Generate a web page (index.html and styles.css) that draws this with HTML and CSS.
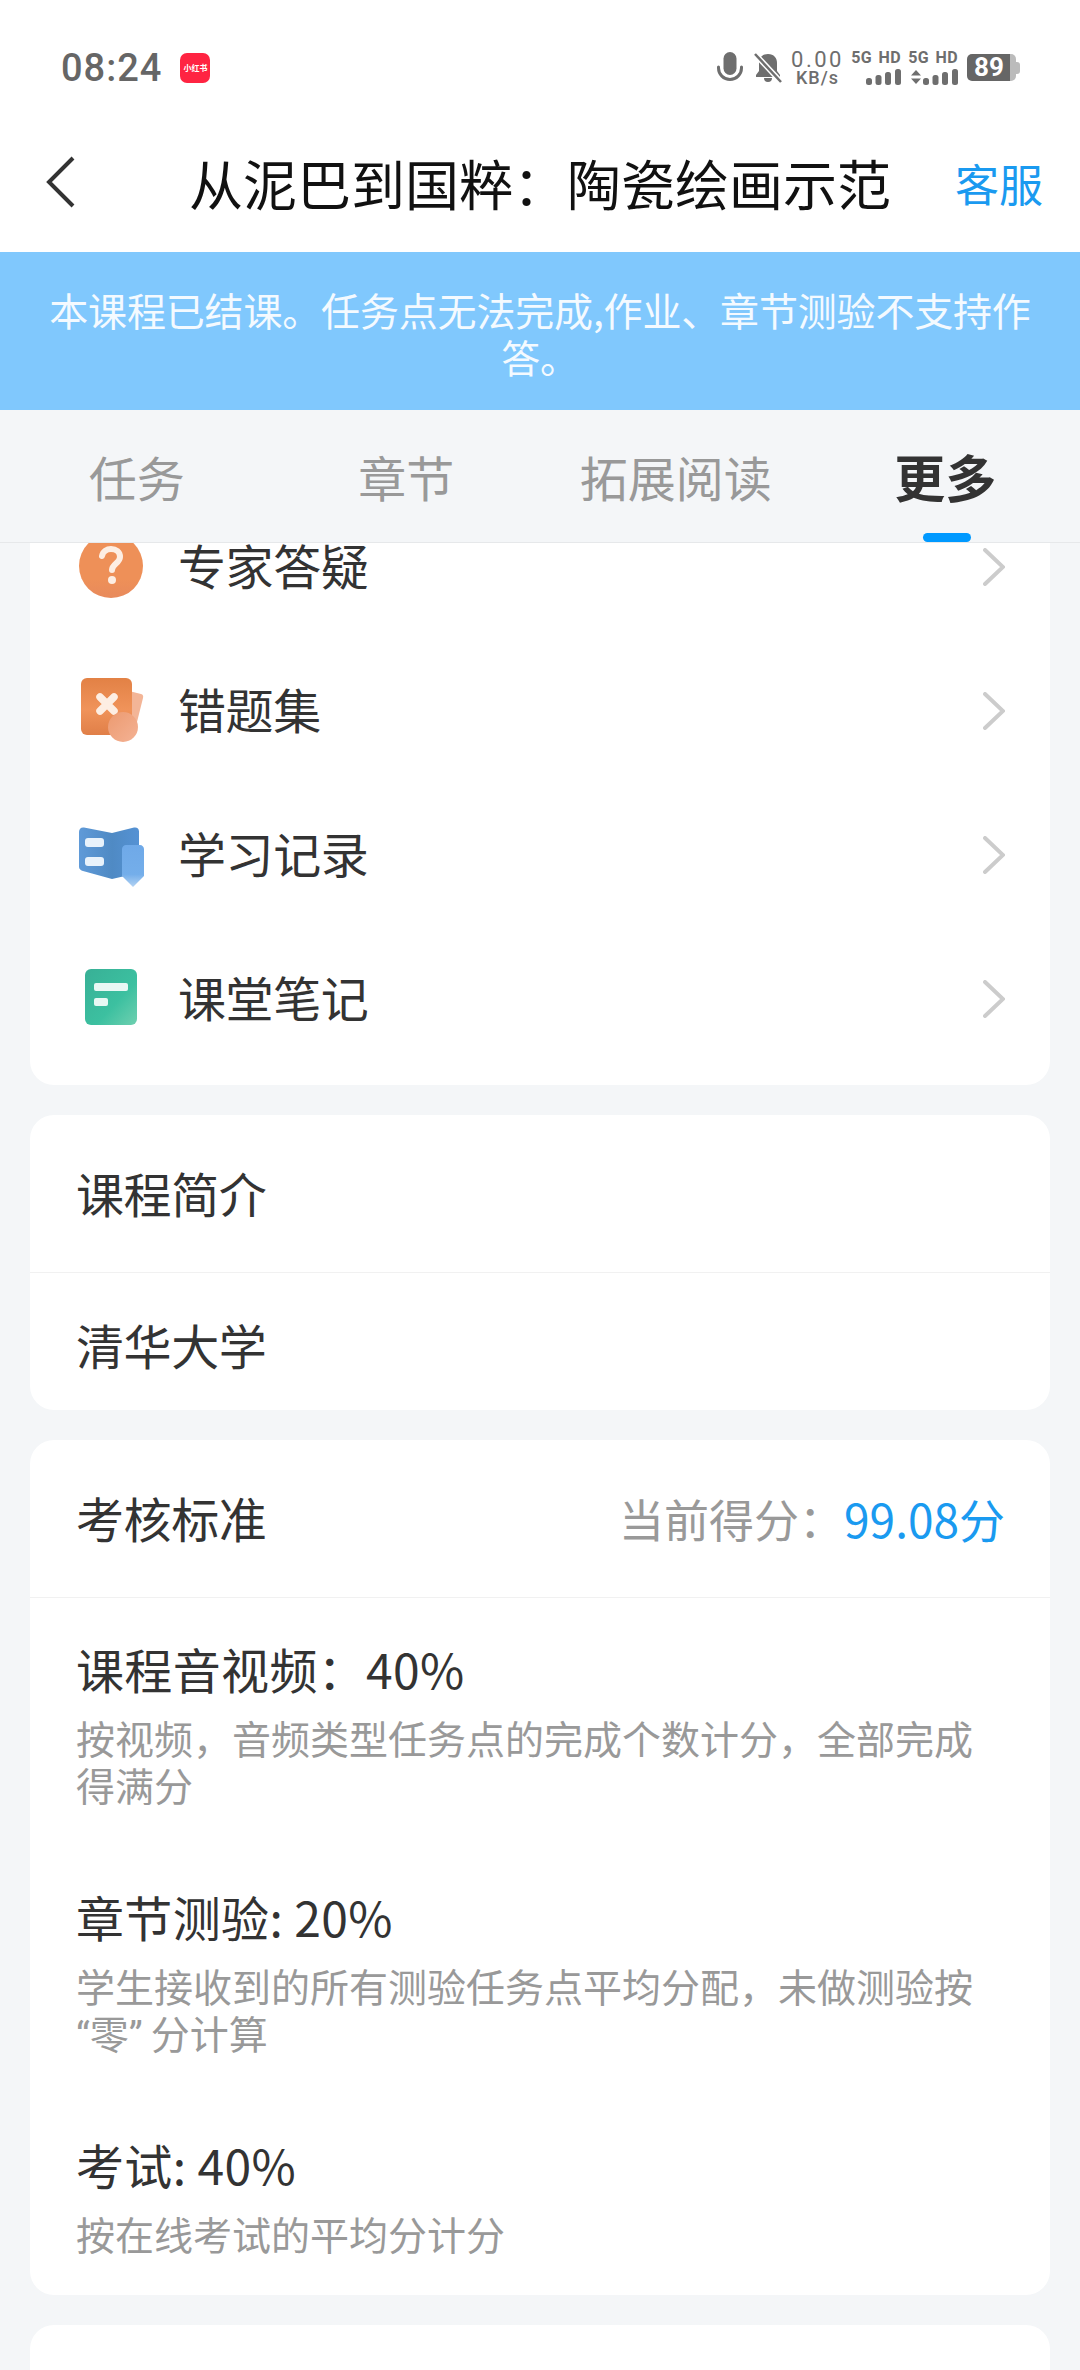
FILE: index.html
```html
<!DOCTYPE html>
<html lang="zh-CN">
<head>
<meta charset="utf-8">
<title>从泥巴到国粹：陶瓷绘画示范</title>
<link rel="stylesheet" href="styles.css">
</head>
<body>
<div class="app">
  <header class="statusbar">
    <div class="status-left">
      <span class="time">08:24</span>
      <span class="xhs">小红书</span>
    </div>
    <div class="status-right">
      <svg class="ic-mic" width="26" height="32" viewBox="0 0 26 32"><rect x="6.500" y="0" width="13" height="23" rx="6.500" fill="#6e6e6e"/><path d="M1.500 15v1a11.500 11.500 0 0 0 23 0v-1" fill="none" stroke="#6e6e6e" stroke-width="3" stroke-linecap="round"/></svg>
      <svg class="ic-bell" width="28" height="30" viewBox="0 0 28 30"><path d="M14 1c6 0 9 4 9 9v8l3 4v2H2v-2l3-4v-8c0-5 3-9 9-9zM10 25h8a4 4 0 0 1-8 0z" fill="#6e6e6e"/><path d="M1 1l26 28" stroke="#fff" stroke-width="5.500"/><path d="M1 1l26 28" stroke="#6e6e6e" stroke-width="2.500"/></svg>
      <div class="speed"><span class="speed-num">0.00</span><span class="speed-unit">KB/s</span></div>
      <div class="sim">
        <span class="sim-label">5G HD</span>
        <svg class="bars" width="35" height="16" viewBox="0 0 35 16"><rect x="0" y="9" width="6" height="7" rx="2.500"/><rect x="9.500" y="6" width="6" height="10" rx="2.500"/><rect x="19" y="3" width="6" height="13" rx="2.500"/><rect x="29" y="0" width="6" height="16" rx="2.500"/></svg>
      </div>
      <div class="sim">
        <span class="sim-label">5G HD</span>
        <svg class="bars" width="47" height="16" viewBox="0 0 47 16"><path d="M5 1l5 5.500H0zM5 15l5-5.500H0z"/><rect x="12" y="9" width="6" height="7" rx="2.500"/><rect x="21.500" y="6" width="6" height="10" rx="2.500"/><rect x="31" y="3" width="6" height="13" rx="2.500"/><rect x="41" y="0" width="6" height="16" rx="2.500"/></svg>
      </div>
      <div class="battery"><span class="batt-level">89</span><span class="batt-tip"></span></div>
    </div>
  </header>

  <nav class="navbar">
    <svg class="back" width="30" height="54" viewBox="0 0 30 54"><path d="M27 3L3 27l24 24" fill="none" stroke="#333" stroke-width="4"/></svg>
    <h1 class="title">从泥巴到国粹：陶瓷绘画示范</h1>
    <a class="service">客服</a>
  </nav>

  <div class="banner">本课程已结课。任务点无法完成,作业、章节测验不支持作答。</div>

  <div class="tabs">
    <span class="tab">任务</span>
    <span class="tab">章节</span>
    <span class="tab">拓展阅读</span>
    <span class="tab active">更多</span>
  </div>

  <main class="scroller">
    <section class="card menu">
      <div class="row">
        <svg class="row-icon" width="80" height="80" viewBox="0 0 80 80">
          <defs><linearGradient id="g1" x1="0" y1="0" x2="0" y2="1"><stop offset="0" stop-color="#ee9058"/><stop offset=".7" stop-color="#ee9058"/><stop offset="1" stop-color="#e88a5c"/></linearGradient></defs>
          <circle cx="40" cy="39" r="32" fill="url(#g1)"/>
          <path d="M31 29c1-5 5-7 9-7 5 0 9 3 9 8 0 6-8 7-8 13" fill="none" stroke="#fdeee3" stroke-width="6" stroke-linecap="round"/>
          <circle cx="41" cy="53" r="4" fill="#fdeee3"/>
        </svg>
        <span class="row-text">专家答疑</span>
        <svg class="chev" width="22" height="38" viewBox="0 0 22 38"><path d="M2 2l18 17L2 36" fill="none" stroke="#ccc" stroke-width="4" stroke-linecap="round"/></svg>
      </div>
      <div class="row">
        <svg class="row-icon" width="80" height="80" viewBox="0 0 80 80">
          <defs>
            <linearGradient id="g2" x1="0" y1="0" x2="0" y2="1"><stop offset="0" stop-color="#e28145"/><stop offset=".55" stop-color="#f0935a"/><stop offset="1" stop-color="#e07f48"/></linearGradient>
            <linearGradient id="g3" x1="0" y1="0" x2="1" y2="1"><stop offset="0" stop-color="#ec9a70"/><stop offset="1" stop-color="#f4b294"/></linearGradient>
          </defs>
          <path d="M58 20l12 3c2 .5 2.500 2 2 4l-6 24H58z" fill="#f3b597"/>
          <rect x="10" y="7" width="51" height="57" rx="6" fill="url(#g2)"/>
          <path d="M29 26l14 14M43 26L29 40" stroke="#fdeee3" stroke-width="7.500" stroke-linecap="round"/>
          <circle cx="52" cy="56" r="15" fill="url(#g3)"/>
        </svg>
        <span class="row-text">错题集</span>
        <svg class="chev" width="22" height="38" viewBox="0 0 22 38"><path d="M2 2l18 17L2 36" fill="none" stroke="#ccc" stroke-width="4" stroke-linecap="round"/></svg>
      </div>
      <div class="row">
        <svg class="row-icon" width="80" height="80" viewBox="0 0 80 80">
          <defs>
            <linearGradient id="g4" x1="0" y1="0" x2="1" y2="0"><stop offset="0" stop-color="#5f9ad8"/><stop offset=".55" stop-color="#4f8ac4"/><stop offset="1" stop-color="#5592d4"/></linearGradient>
            <linearGradient id="g5" x1="0" y1="0" x2="0" y2="1"><stop offset="0" stop-color="#6fa9e8"/><stop offset=".7" stop-color="#74aeea"/><stop offset="1" stop-color="#b4d3f3"/></linearGradient>
          </defs>
          <path d="M8 17c0-3 2-5 5-4.500L41 18l22-5.500c3-.5 5 1 5 4V55c0 2-1 3-3 3.500L41 64 12 56c-2-.5-4-2-4-4z" fill="url(#g4)"/>
          <rect x="14" y="23" width="19" height="9" rx="3" fill="#e8f2fb"/>
          <rect x="14" y="42" width="19" height="9" rx="3" fill="#e8f2fb"/>
          <path d="M51 34c0-2 2-4 4-4h14c2 0 4 2 4 4v27L62 72 51 61z" fill="url(#g5)"/>
        </svg>
        <span class="row-text">学习记录</span>
        <svg class="chev" width="22" height="38" viewBox="0 0 22 38"><path d="M2 2l18 17L2 36" fill="none" stroke="#ccc" stroke-width="4" stroke-linecap="round"/></svg>
      </div>
      <div class="row">
        <svg class="row-icon" width="80" height="80" viewBox="0 0 80 80">
          <defs><linearGradient id="g6" x1="0" y1="0" x2="1" y2="1"><stop offset="0" stop-color="#38b096"/><stop offset=".6" stop-color="#3cc0a0"/><stop offset="1" stop-color="#6fd0b0"/></linearGradient></defs>
          <rect x="14" y="10" width="52" height="56" rx="6" fill="url(#g6)"/>
          <rect x="23" y="24" width="34" height="8" rx="2" fill="#e8f8f4"/>
          <rect x="23" y="39" width="14" height="8" rx="2" fill="#e8f8f4"/>
        </svg>
        <span class="row-text">课堂笔记</span>
        <svg class="chev" width="22" height="38" viewBox="0 0 22 38"><path d="M2 2l18 17L2 36" fill="none" stroke="#ccc" stroke-width="4" stroke-linecap="round"/></svg>
      </div>
    </section>

    <section class="card">
      <div class="card-head"><span class="head-title">课程简介</span></div>
      <div class="card-body-single">清华大学</div>
    </section>

    <section class="card">
      <div class="card-head">
        <span class="head-title">考核标准</span>
        <span class="score"><span class="score-label">当前得分：</span><span class="score-value">99.08分</span></span>
      </div>
      <div class="rules">
        <div class="rule">
          <div class="rule-title">课程音视频：40%</div>
          <div class="rule-desc">按视频，音频类型任务点的完成个数计分，全部完成得满分</div>
        </div>
        <div class="rule">
          <div class="rule-title">章节测验: 20%</div>
          <div class="rule-desc">学生接收到的所有测验任务点平均分配，未做测验按<span class="latin-quote">“</span>零<span class="latin-quote close">”</span>分计算</div>
        </div>
        <div class="rule">
          <div class="rule-title">考试: 40%</div>
          <div class="rule-desc">按在线考试的平均分计分</div>
        </div>
      </div>
    </section>

    <section class="card tail"></section>
  </main>
</div>
</body>
</html>
```

FILE: styles.css
```css
* { box-sizing: border-box; }
html, body { margin: 0; padding: 0; }
body {
  width: 1080px;
  height: 2370px;
  overflow: hidden;
  background: #f4f6f8;
  font-family: "Noto Sans CJK SC", "Noto Sans", sans-serif;
  color: #333;
}
.app { display: flex; flex-direction: column; height: 2370px; }

.statusbar {
  height: 113px;
  padding: 22px 60px 0 61px;
  background: #fff;
  display: flex;
  align-items: center;
  justify-content: space-between;
  flex: none;
}
.status-left { display: flex; align-items: center; gap: 18px; }
.time {
  font-family: Roboto, sans-serif;
  font-size: 38px;
  font-weight: 500;
  letter-spacing: 1px;
  color: #666;
}
.xhs {
  width: 30px;
  height: 30px;
  border-radius: 7px;
  background: #ff2442;
  color: #fff;
  font-size: 8px;
  font-weight: 700;
  display: flex;
  align-items: center;
  justify-content: center;
  white-space: nowrap;
}
.status-right { display: flex; align-items: center; color: #6e6e6e; }
.ic-mic { margin-right: 11px; }
.ic-bell { margin-right: 10px; }
.speed {
  display: flex;
  flex-direction: column;
  align-items: center;
  width: 51px;
  margin-right: 10px;
  font-family: Roboto, sans-serif;
}
.speed-num { font-size: 22px; line-height: 20px; letter-spacing: 2.500px; }
.speed-unit { font-size: 18px; line-height: 16px; letter-spacing: 1px; font-weight: 500; }
.sim {
  display: flex;
  flex-direction: column;
  align-items: flex-end;
  width: 48px;
  margin-right: 9px;
  gap: 4px;
}
.sim-label {
  font-family: Roboto, sans-serif;
  font-size: 16px;
  line-height: 14px;
  font-weight: 700;
  white-space: nowrap;
  letter-spacing: .4px;
  word-spacing: 2px;
}
.bars { fill: #6e6e6e; display: block; }
.battery { display: flex; align-items: center; }
.batt-level {
  width: 49px;
  height: 27px;
  border-radius: 5px;
  background: linear-gradient(90deg, #666 0, #666 88%, #bbb 88%);
  color: #fff;
  font-family: Roboto, sans-serif;
  font-size: 26px;
  line-height: 27px;
  font-weight: 700;
  text-align: center;
  padding-right: 5px;
}
.batt-tip { width: 4px; height: 12px; background: #bbb; border-radius: 0 3px 3px 0; }

.navbar {
  height: 139px;
  padding: 0 37px 0 46px;
  background: #fff;
  display: grid;
  grid-template-columns: 115px 1fr 124px;
  align-items: center;
  flex: none;
}
.back { display: block; margin-top: -2px; }
.title {
  margin: 0;
  font-size: 54px;
  font-weight: 400;
  color: #111;
  text-align: center;
  white-space: nowrap;
  line-height: 70px;
}
.service { font-size: 44px; color: #1a9af0; text-align: right; line-height: 60px; }

.banner {
  flex: none;
  height: 158px;
  padding: 34px 40px 0;
  background: #80c8fd;
  color: #f4faff;
  font-size: 39px;
  letter-spacing: -.17px;
  line-height: 47px;
  text-align: center;
}

.tabs {
  flex: none;
  height: 133px;
  display: grid;
  grid-template-columns: repeat(4, 1fr);
  align-items: center;
  background: #f4f6f8;
  border-bottom: 1px solid #e6e8ea;
  padding-left: 2px;
  position: relative;
  z-index: 1;
}
.tab { text-align: center; font-size: 48px; color: #999; position: relative; }
.tab.active { font-size: 51px; font-weight: 700; color: #333; }
.tab.active::after {
  content: "";
  position: absolute;
  left: 112px;
  width: 48px;
  height: 9px;
  top: 94px;
  border-radius: 5px;
  background: #0099ff;
}

.scroller {
  flex: 1;
  min-height: 0;
  overflow: hidden;
  padding: 0 30px;
  display: flex;
  flex-direction: column;
  gap: 30px;
}
.card { background: #fff; border-radius: 24px; flex: none; }
.menu { margin-top: -48px; padding-bottom: 14px; }
.row {
  height: 144px;
  padding: 0 45px 0 41px;
  display: flex;
  align-items: center;
}
.row-icon { flex: none; margin-right: 27px; }
.row-text { flex: 1; font-size: 48px; letter-spacing: -.4px; color: #333; padding-bottom: 7px; }
.chev { flex: none; }

.card-head {
  height: 158px;
  padding: 0 45px 0 46px;
  display: flex;
  align-items: center;
  justify-content: space-between;
  border-bottom: 1px solid #f1f1f1;
}
.head-title { font-size: 48px; letter-spacing: -.4px; color: #333; padding-bottom: 4px; }
.card-body-single {
  height: 137px;
  padding: 4px 46px 0;
  display: flex;
  align-items: center;
  font-size: 48px;
  letter-spacing: -.4px;
  color: #333;
}
.score { font-size: 46px; padding-bottom: 1px; }
.score-label { color: #999; font-size: 45px; }
.score-value { color: #1a9af0; }
.rules { padding: 0 46px 38px; }
.rule { padding-top: 35px; }
.rule + .rule { padding-top: 73px; }
.rule-title { font-size: 48px; letter-spacing: .35px; line-height: 70px; color: #333; }
.rule-desc { font-size: 39px; line-height: 47px; color: #999; margin-top: 11px; }
.latin-quote { font-family: Roboto, sans-serif; line-height: 0; }
.latin-quote.close { margin-right: 8px; }
.tail { height: 200px; }
```
